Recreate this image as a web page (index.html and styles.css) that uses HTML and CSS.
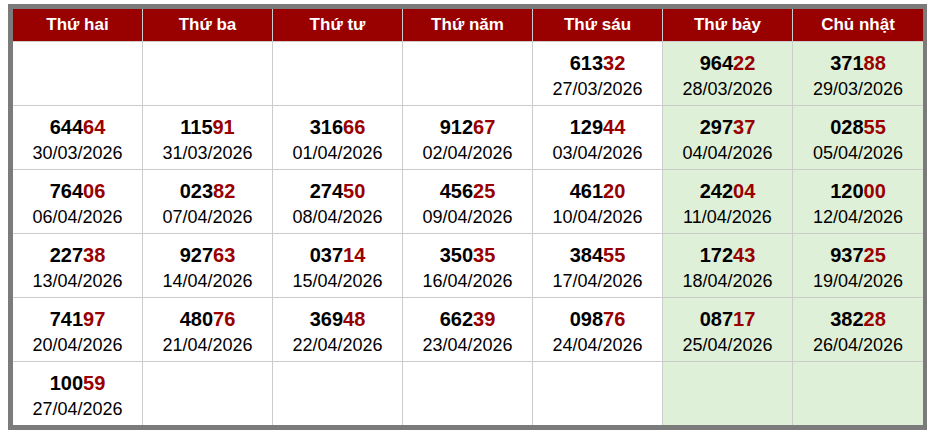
FILE: index.html
```html
<!DOCTYPE html>
<html lang="vi">
<head>
<meta charset="utf-8">
<title>Lịch kết quả</title>
<link rel="stylesheet" href="styles.css">
</head>
<body>
<div class="frame">
  <div class="cal">
    <div class="hd">Thứ hai</div>
    <div class="hd">Thứ ba</div>
    <div class="hd">Thứ tư</div>
    <div class="hd">Thứ năm</div>
    <div class="hd">Thứ sáu</div>
    <div class="hd">Thứ bảy</div>
    <div class="hd last">Chủ nhật</div>

    <div class="c"></div>
    <div class="c"></div>
    <div class="c"></div>
    <div class="c"></div>
    <div class="c"><b>613<i>32</i></b><span>27/03/2026</span></div>
    <div class="c we"><b>964<i>22</i></b><span>28/03/2026</span></div>
    <div class="c we last"><b>371<i>88</i></b><span>29/03/2026</span></div>

    <div class="c"><b>644<i>64</i></b><span>30/03/2026</span></div>
    <div class="c"><b>115<i>91</i></b><span>31/03/2026</span></div>
    <div class="c"><b>316<i>66</i></b><span>01/04/2026</span></div>
    <div class="c"><b>912<i>67</i></b><span>02/04/2026</span></div>
    <div class="c"><b>129<i>44</i></b><span>03/04/2026</span></div>
    <div class="c we"><b>297<i>37</i></b><span>04/04/2026</span></div>
    <div class="c we last"><b>028<i>55</i></b><span>05/04/2026</span></div>

    <div class="c"><b>764<i>06</i></b><span>06/04/2026</span></div>
    <div class="c"><b>023<i>82</i></b><span>07/04/2026</span></div>
    <div class="c"><b>274<i>50</i></b><span>08/04/2026</span></div>
    <div class="c"><b>456<i>25</i></b><span>09/04/2026</span></div>
    <div class="c"><b>461<i>20</i></b><span>10/04/2026</span></div>
    <div class="c we"><b>242<i>04</i></b><span>11/04/2026</span></div>
    <div class="c we last"><b>120<i>00</i></b><span>12/04/2026</span></div>

    <div class="c"><b>227<i>38</i></b><span>13/04/2026</span></div>
    <div class="c"><b>927<i>63</i></b><span>14/04/2026</span></div>
    <div class="c"><b>037<i>14</i></b><span>15/04/2026</span></div>
    <div class="c"><b>350<i>35</i></b><span>16/04/2026</span></div>
    <div class="c"><b>384<i>55</i></b><span>17/04/2026</span></div>
    <div class="c we"><b>172<i>43</i></b><span>18/04/2026</span></div>
    <div class="c we last"><b>937<i>25</i></b><span>19/04/2026</span></div>

    <div class="c"><b>741<i>97</i></b><span>20/04/2026</span></div>
    <div class="c"><b>480<i>76</i></b><span>21/04/2026</span></div>
    <div class="c"><b>369<i>48</i></b><span>22/04/2026</span></div>
    <div class="c"><b>662<i>39</i></b><span>23/04/2026</span></div>
    <div class="c"><b>098<i>76</i></b><span>24/04/2026</span></div>
    <div class="c we"><b>087<i>17</i></b><span>25/04/2026</span></div>
    <div class="c we last"><b>382<i>28</i></b><span>26/04/2026</span></div>

    <div class="c bot"><b>100<i>59</i></b><span>27/04/2026</span></div>
    <div class="c bot"></div>
    <div class="c bot"></div>
    <div class="c bot"></div>
    <div class="c bot"></div>
    <div class="c we bot"></div>
    <div class="c we bot last"></div>
  </div>
</div>
</body>
</html>
```

FILE: styles.css
```css
html, body {
  margin: 0;
  padding: 0;
  background: #ffffff;
}
body {
  padding: 4px 0 0 8px;
  font-family: "Liberation Sans", Arial, sans-serif;
  color: #000;
}
.frame {
  width: 910px;
  border-style: solid;
  border-color: #7b7b7b;
  border-width: 5px 4px 5px 5px;
}
.cal {
  display: grid;
  grid-template-columns: repeat(7, 130px);
}
.hd {
  background: #990000;
  color: #ffffff;
  font-weight: bold;
  font-size: 17px;
  line-height: 32px;
  text-align: center;
  border-right: 1px solid #cccccc;
  border-bottom: 1px solid #cccccc;
}
.c {
  display: flex;
  flex-direction: column;
  align-items: center;
  padding: 8px 0 3px;
  border-right: 1px solid #cccccc;
  border-bottom: 1px solid #cccccc;
  background: #ffffff;
}
.c.we {
  background: #dff0d8;
}
.last {
  border-right: none;
}
.bot {
  border-bottom: none;
}
.c b {
  font-weight: bold;
  font-size: 20px;
  line-height: 26px;
}
.c b i {
  font-style: normal;
  color: #990000;
}
.c span {
  font-size: 18px;
  line-height: 26px;
}
.c:empty {
  min-height: 52px;
}
```
